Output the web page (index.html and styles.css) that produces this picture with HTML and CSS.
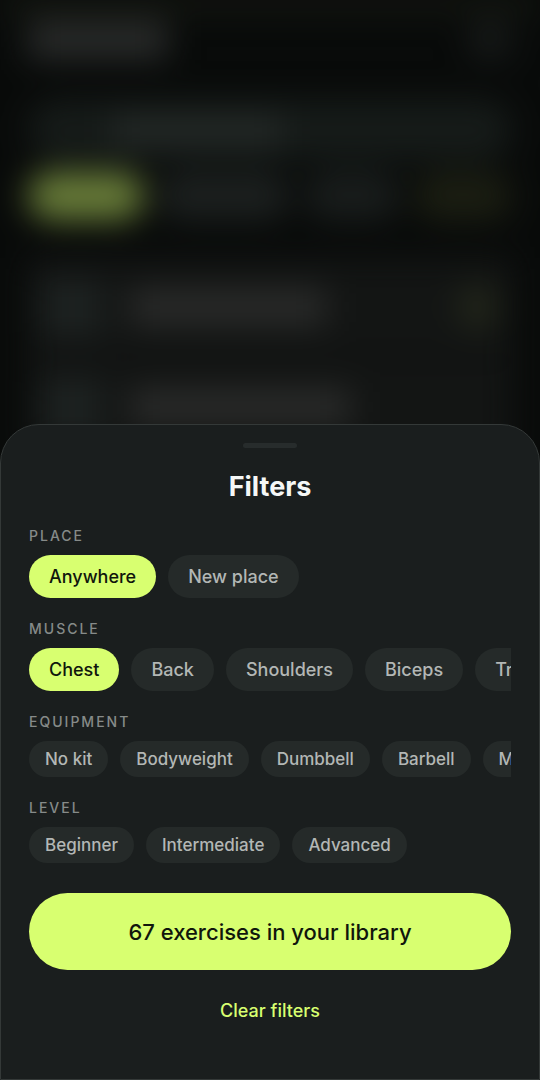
FILE: index.html
```html
<!DOCTYPE html>
<html lang="en">
<head>
    <meta charset="UTF-8">
    <meta name="viewport" content="width=device-width, initial-scale=1.0">
    <title>Filters</title>
    <link rel="stylesheet" href="styles.css">
</head>
<body>
    <!-- Library page, dimmed and blurred behind the sheet -->
    <div class="library" aria-hidden="true">
        <div class="library-header">
            <div class="library-title"></div>
            <div class="library-action"></div>
        </div>
        <div class="library-search">
            <div class="library-query"></div>
        </div>
        <div class="library-tabs">
            <div class="tab tab-active"></div>
            <div class="tab tab-wide"></div>
            <div class="tab"></div>
            <div class="tab tab-filter"></div>
        </div>
        <div class="library-list">
            <div class="card">
                <div class="card-icon"></div>
                <div class="card-name"></div>
                <div class="card-mark"></div>
            </div>
            <div class="card">
                <div class="card-icon"></div>
                <div class="card-name card-name-long"></div>
            </div>
        </div>
    </div>

    <main class="sheet">
        <div class="handle"></div>
        <h1 class="sheet-title">Filters</h1>

        <section class="group" aria-labelledby="placeLabel">
            <h2 class="group-label" id="placeLabel">PLACE</h2>
            <div class="chips">
                <button type="button" class="chip active" aria-pressed="true">Anywhere</button>
                <button type="button" class="chip" aria-pressed="false">New place</button>
            </div>
        </section>

        <section class="group" aria-labelledby="muscleLabel">
            <h2 class="group-label" id="muscleLabel">MUSCLE</h2>
            <div class="chips">
                <button type="button" class="chip active" aria-pressed="true">Chest</button>
                <button type="button" class="chip" aria-pressed="false">Back</button>
                <button type="button" class="chip" aria-pressed="false">Shoulders</button>
                <button type="button" class="chip" aria-pressed="false">Biceps</button>
                <button type="button" class="chip" aria-pressed="false">Triceps</button>
            </div>
        </section>

        <section class="group" aria-labelledby="equipmentLabel">
            <h2 class="group-label" id="equipmentLabel">EQUIPMENT</h2>
            <div class="chips">
                <button type="button" class="chip small" aria-pressed="false">No kit</button>
                <button type="button" class="chip small" aria-pressed="false">Bodyweight</button>
                <button type="button" class="chip small" aria-pressed="false">Dumbbell</button>
                <button type="button" class="chip small" aria-pressed="false">Barbell</button>
                <button type="button" class="chip small" aria-pressed="false">Machine</button>
            </div>
        </section>

        <section class="group" aria-labelledby="levelLabel">
            <h2 class="group-label" id="levelLabel">LEVEL</h2>
            <div class="chips">
                <button type="button" class="chip small" aria-pressed="false">Beginner</button>
                <button type="button" class="chip small" aria-pressed="false">Intermediate</button>
                <button type="button" class="chip small" aria-pressed="false">Advanced</button>
            </div>
        </section>

        <button type="button" class="btn-apply">67 exercises in your library</button>
        <button type="button" class="btn-clear">Clear filters</button>
    </main>
</body>
</html>
```

FILE: styles.css
```css
* {
    box-sizing: border-box;
}
body {
    margin: 0;
    min-height: 100vh;
    font-family: Inter, "Liberation Sans", sans-serif;
    background-color: #090b0a;
    color: #f5f7f6;
    overflow: hidden;
}
.library {
    padding: 0 28px;
    border-top: 8px solid #22261a;
    filter: blur(16px);
}
.library-header {
    display: flex;
    justify-content: space-between;
    align-items: center;
    height: 64px;
}
.library-title {
    width: 140px;
    height: 38px;
    background-color: #292b2a;
}
.library-action {
    width: 44px;
    height: 40px;
    border-radius: 20px;
    background-color: #171a19;
}
.library-search {
    display: flex;
    align-items: center;
    height: 60px;
    margin-top: 28px;
    padding-left: 84px;
    border-radius: 30px;
    background-color: #161b19;
}
.library-query {
    width: 170px;
    height: 28px;
    background-color: #252a28;
}
.library-tabs {
    display: flex;
    gap: 14px;
    margin-top: 12px;
}
.tab {
    width: 96px;
    height: 48px;
    border-radius: 24px;
    background-color: #191d1c;
}
.tab-active {
    width: 116px;
    background-color: #687c39;
}
.tab-wide {
    width: 132px;
    background-color: #1c201f;
}
.tab-filter {
    flex: 1;
    background-color: #1b1e12;
}
.library-list {
    display: flex;
    flex-direction: column;
    gap: 2px;
    margin-top: 38px;
}
.card {
    display: flex;
    align-items: center;
    gap: 28px;
    height: 98px;
    padding: 0 14px;
    background-color: #131514;
}
.card-icon {
    width: 60px;
    height: 56px;
    background-color: #1d2221;
}
.card-name {
    width: 196px;
    height: 38px;
    background-color: #292a29;
}
.card-name-long {
    width: 220px;
}
.card-mark {
    width: 40px;
    height: 44px;
    margin-left: auto;
    border-radius: 20px;
    background-color: #22261a;
}
.sheet {
    position: absolute;
    left: 0;
    right: 0;
    bottom: 0;
    display: flex;
    flex-direction: column;
    gap: 21px;
    padding: 18px 28px 50px;
    border: 1px solid #343938;
    border-radius: 39px 39px 0 0;
    background-color: #1a1e1e;
}
.handle {
    align-self: center;
    width: 54px;
    height: 5px;
    border-radius: 3px;
    background-color: #272c2c;
}
.sheet-title {
    margin: 0;
    font-size: 27px;
    line-height: 36px;
    font-weight: 700;
    text-align: center;
}
.group-label {
    margin: 0 0 9px;
    font-size: 14px;
    line-height: 20px;
    font-weight: 500;
    letter-spacing: 2px;
    color: #868b89;
}
.chips {
    display: flex;
    gap: 12px;
    overflow: hidden;
}
.chip {
    flex-shrink: 0;
    height: 43px;
    padding: 0 20px;
    border: none;
    border-radius: 22px;
    background-color: #252a29;
    color: #b3b7b5;
    font-family: inherit;
    font-size: 18px;
    font-weight: 500;
    cursor: pointer;
}
.chip.active {
    background-color: #d8ff70;
    color: #10160c;
}
.chip.small {
    height: 36px;
    padding: 0 16px;
    border-radius: 18px;
    font-size: 17px;
}
.btn-apply {
    height: 77px;
    margin-top: 9px;
    border: none;
    border-radius: 39px;
    background-color: #d8ff70;
    color: #10160c;
    font-family: inherit;
    font-size: 22px;
    font-weight: 500;
    cursor: pointer;
}
.btn-clear {
    align-self: center;
    height: 38px;
    padding: 0 20px;
    border: none;
    background: none;
    color: #d8ff70;
    font-family: inherit;
    font-size: 18px;
    font-weight: 500;
    cursor: pointer;
}
```
